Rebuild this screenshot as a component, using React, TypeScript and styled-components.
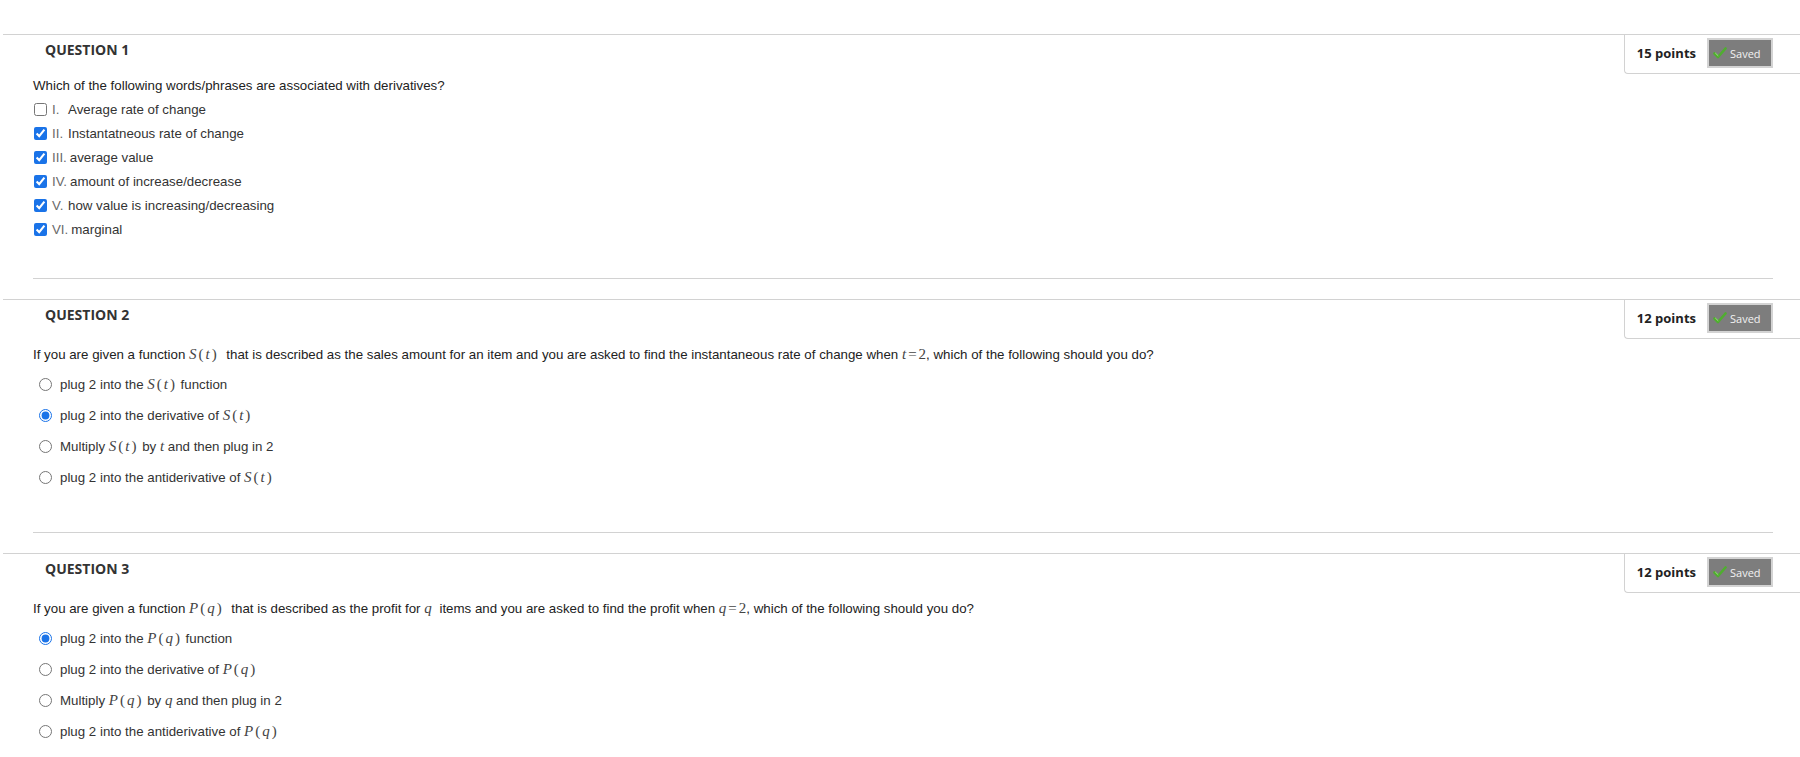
import styled, { createGlobalStyle } from "styled-components"

const GlobalStyle = createGlobalStyle`
    html, body {
        margin: 0;
        padding: 0;
        background: #fff;
        overflow: hidden;
    }
    body {
        font-family: "Liberation Sans", Arial, sans-serif;
    }
`

type Choice = {
    label?: string,
    text: React.ReactNode,
    checked: boolean
}

const Fn = ({ name, arg }: { name: string, arg: string }) => (
    <MathText>
        <Var>{name}</Var>
        <Paren>(</Paren>
        <Var>{arg}</Var>
        <Paren>)</Paren>
    </MathText>
)

const Eq = ({ v }: { v: string }) => (
    <MathText>
        <Var>{v}</Var>
        <Op>=</Op>
        <Num>2</Num>
    </MathText>
)

const SavedCheck = () => (
    <svg width="14" height="12" viewBox="0 0 14 12">
        <path d="M1.5 6.5 L5 10 L12.5 1.5" fill="none" stroke="#4fae2f" strokeWidth="2.6" strokeLinecap="round" strokeLinejoin="round" />
        <path d="M2.5 6.2 L5 8.6" fill="none" stroke="#9be07a" strokeWidth="1" strokeLinecap="round" />
    </svg>
)

interface QuestionProps {
    number: number,
    points: number,
    prompt: React.ReactNode,
    kind: "checkbox" | "radio",
    choices: Choice[],
    first?: boolean
}

const QuestionBlock = ({ number, points, prompt, kind, choices, first }: QuestionProps) => {
    return (
        <Question $first={first}>
            <Header>
                <Title>QUESTION {number}</Title>
                <PointsBox>
                    <Points>{points} points</Points>
                    <Saved><SavedCheck />Saved</Saved>
                </PointsBox>
            </Header>
            <Body $kind={kind}>
                <Prompt $kind={kind}>{prompt}</Prompt>
                <Choices>
                    {choices.map((c, i) => (
                        <ChoiceRow key={i} $kind={kind}>
                            {kind === "checkbox"
                                ? <CheckBox type="checkbox" checked={c.checked} readOnly />
                                : <Radio type="radio" name={"q" + number} checked={c.checked} readOnly />}
                            {c.label && <Roman>{c.label}</Roman>}
                            <span>{c.text}</span>
                        </ChoiceRow>
                    ))}
                </Choices>
            </Body>
        </Question>
    )
}

export default function App() {
    return (
        <>
            <GlobalStyle />
            <Page>
                <QuestionBlock
                    first
                    number={1}
                    points={15}
                    kind="checkbox"
                    prompt="Which of the following words/phrases are associated with derivatives?"
                    choices={[
                        { label: "I.", text: "Average rate of change", checked: false },
                        { label: "II.", text: "Instantatneous rate of change", checked: true },
                        { label: "III.", text: "average value", checked: true },
                        { label: "IV.", text: "amount of increase/decrease", checked: true },
                        { label: "V.", text: "how value is increasing/decreasing", checked: true },
                        { label: "VI.", text: "marginal", checked: true },
                    ]}
                />
                <QuestionBlock
                    number={2}
                    points={12}
                    kind="radio"
                    prompt={<>If you are given a function <Fn name="S" arg="t" /><Gap /> that is described as the sales amount for an item and you are asked to find the instantaneous rate of change when <Eq v="t" />, which of the following should you do?</>}
                    choices={[
                        { text: <>plug 2 into the <Fn name="S" arg="t" /> function</>, checked: false },
                        { text: <>plug 2 into the derivative of <Fn name="S" arg="t" /></>, checked: true },
                        { text: <>Multiply <Fn name="S" arg="t" /> by <MathText><Var>t</Var></MathText> and then plug in 2</>, checked: false },
                        { text: <>plug 2 into the antiderivative of <Fn name="S" arg="t" /></>, checked: false },
                    ]}
                />
                <QuestionBlock
                    number={3}
                    points={12}
                    kind="radio"
                    prompt={<>If you are given a function <Fn name="P" arg="q" /><Gap /> that is described as the profit for <MathText><Var>q</Var></MathText><Gap /> items and you are asked to find the profit when <Eq v="q" />, which of the following should you do?</>}
                    choices={[
                        { text: <>plug 2 into the <Fn name="P" arg="q" /> function</>, checked: true },
                        { text: <>plug 2 into the derivative of <Fn name="P" arg="q" /></>, checked: false },
                        { text: <>Multiply <Fn name="P" arg="q" /> by <MathText><Var>q</Var></MathText> and then plug in 2</>, checked: false },
                        { text: <>plug 2 into the antiderivative of <Fn name="P" arg="q" /></>, checked: false },
                    ]}
                />
            </Page>
        </>
    )
}

const Page = styled.main`
    padding-top: 34px;
    color: #333;
`

const Question = styled.section<{ $first?: boolean }>`
    border-top: 1px solid #d2d2d2;
    margin-left: 3px;
    margin-top: ${p => p.$first ? "0" : "20px"};
`

const Header = styled.div`
    display: flex;
    justify-content: space-between;
    align-items: flex-start;
`

const Title = styled.h2`
    margin: 0;
    padding: 7px 0 0 42px;
    font-family: "Open Sans", sans-serif;
    font-size: 14px;
    line-height: 16px;
    font-weight: 700;
    color: #333;
`

const PointsBox = styled.div`
    display: flex;
    align-items: center;
    gap: 11px;
    padding: 3px 27px 5px 12px;
    border-left: 1px solid #d2d2d2;
    border-bottom: 1px solid #d2d2d2;
    border-bottom-left-radius: 4px;
`

const Points = styled.span`
    font-family: "Open Sans", sans-serif;
    font-size: 13px;
    font-weight: 700;
    color: #222;
`

const Saved = styled.span`
    display: inline-flex;
    align-items: center;
    gap: 3px;
    box-sizing: border-box;
    width: 66px;
    height: 30px;
    padding-left: 4px;
    background-color: #7d7d7d;
    border: 2px solid #d3d3d3;
    color: #f2f2f2;
    font-family: "Open Sans", sans-serif;
    font-size: 11px;
`

const Body = styled.div<{ $kind: string }>`
    margin: 0 27px 0 30px;
    padding-bottom: ${p => p.$kind === "checkbox" ? "37px" : "39px"};
    border-bottom: 1px solid #d2d2d2;
`

const Prompt = styled.p<{ $kind: string }>`
    margin: 4px 0 0;
    font-size: 13.3px;
    line-height: ${p => p.$kind === "checkbox" ? "16px" : "22px"};
    color: #222;
`

const Choices = styled.div`
    display: flex;
    flex-direction: column;
    margin-top: 3px;
`

const ChoiceRow = styled.label<{ $kind: string }>`
    display: flex;
    align-items: center;
    height: ${p => p.$kind === "checkbox" ? "24px" : "31px"};
    font-size: 13.3px;
    color: #333;
`

const CheckBox = styled.input`
    width: 13px;
    height: 13px;
    margin: 0 5px 0 1px;
    accent-color: #1a73e8;
`

const Radio = styled.input`
    width: 13px;
    height: 13px;
    margin: 0 8px 0 6px;
    accent-color: #1a73e8;
`

const Roman = styled.span`
    min-width: 13px;
    margin-right: 3px;
    color: #6a6a6a;
`

const MathText = styled.span`
    font-family: "Liberation Serif", "Times New Roman", serif;
    font-size: 15px;
    color: #444;
`

const Var = styled.i`
    font-style: italic;
`

const Paren = styled.span`
    padding: 0 2px;
`

const Op = styled.span`
    padding: 0 2px;
`

const Num = styled.span``

const Gap = styled.span`
    display: inline-block;
    width: 4px;
`
